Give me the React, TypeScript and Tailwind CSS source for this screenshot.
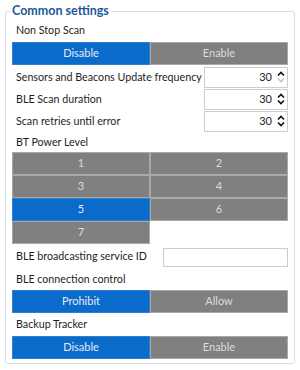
import React from "react";

const font = { fontFamily: 'Lato, "Noto Sans", sans-serif' };

function Btn({ label, active }: { label: string; active?: boolean }) {
  return (
    <div
      className={
        active
          ? "flex-1 h-full flex items-center justify-center border border-[#2f7fcc] bg-[#0a6bcb] text-[#e3ecf9] text-[11px]"
          : "flex-1 h-full flex items-center justify-center border border-[#a9a9a9] bg-[#808080] text-[#dcdcdc] text-[11px]"
      }
    >
      {label}
    </div>
  );
}

function Spin({ downDisabled }: { downDisabled?: boolean }) {
  return (
    <svg width="8" height="14" viewBox="0 0 8 14" className="ml-[5px] shrink-0">
      <path d="M1 5.5 L4 2.5 L7 5.5" fill="none" stroke="#111" strokeWidth="1.6" />
      <path
        d="M1 8.5 L4 11.5 L7 8.5"
        fill="none"
        stroke={downDisabled ? "#c4c4c4" : "#111"}
        strokeWidth="1.6"
      />
    </svg>
  );
}

function NumRow({ label, downDisabled }: { label: string; downDisabled?: boolean }) {
  return (
    <div className="h-[22px] flex items-center justify-between">
      <span className="pl-[4px] text-[10.7px] text-[#1e1e1e] whitespace-nowrap">{label}</span>
      <div className="w-[84px] h-[21px] shrink-0 border border-[#cdcdcd] flex items-center justify-end pr-[2px] text-[11px] text-[#1e1e1e]">
        <span>30</span>
        <Spin downDisabled={downDisabled} />
      </div>
    </div>
  );
}

function Label({ text, h }: { text: string; h: string }) {
  return (
    <div className={`${h} flex items-center pl-[4px] text-[10.7px] text-[#1e1e1e] whitespace-nowrap`}>{text}</div>
  );
}

export default function App() {
  return (
    <div className="w-[300px] h-[370px] bg-white pt-[3px]" style={font}>
      <fieldset className="mx-[5px] min-w-0 h-[361px] border border-[#d6e0ea] rounded-[3px] px-[6px]">
        <legend className="ml-[-2px] px-[2px] text-[12.5px] font-bold text-[#1b5a97] leading-[16px]">
          Common settings
        </legend>
        <Label text="Non Stop Scan" h="h-[23px]" />
        <div className="h-[23px] flex">
          <Btn label="Disable" active />
          <Btn label="Enable" />
        </div>
        <div className="pt-[1px]">
          <NumRow label="Sensors and Beacons Update frequency" downDisabled />
          <NumRow label="BLE Scan duration" />
          <NumRow label="Scan retries until error" />
        </div>
        <Label text="BT Power Level" h="h-[20px]" />
        <div className="grid grid-cols-2 auto-rows-[23px]">
          <Btn label="1" />
          <Btn label="2" />
          <Btn label="3" />
          <Btn label="4" />
          <Btn label="5" active />
          <Btn label="6" />
          <Btn label="7" />
        </div>
        <div className="h-[24px] flex items-center justify-between">
          <span className="pl-[4px] text-[10.7px] text-[#1e1e1e] whitespace-nowrap">BLE broadcasting service ID</span>
          <div className="w-[125px] h-[19px] mt-[3px] shrink-0 border border-[#cdcdcd]" />
        </div>
        <Label text="BLE connection control" h="h-[22px]" />
        <div className="h-[23px] flex">
          <Btn label="Prohibit" active />
          <Btn label="Allow" />
        </div>
        <Label text="Backup Tracker" h="h-[23px]" />
        <div className="h-[23px] flex">
          <Btn label="Disable" active />
          <Btn label="Enable" />
        </div>
      </fieldset>
    </div>
  );
}
